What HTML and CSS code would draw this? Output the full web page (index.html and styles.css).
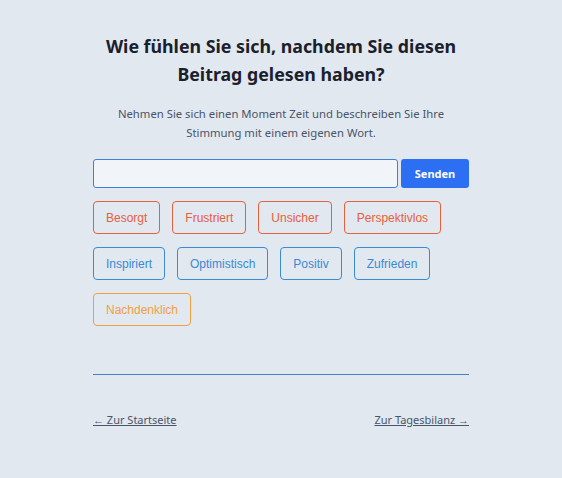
FILE: index.html
```html
<!DOCTYPE html>
<html lang="de">

<head>
    <meta charset="UTF-8">
    <meta name="viewport" content="width=device-width, initial-scale=1.0">
    <title>Stimmung</title>
    <link rel="stylesheet" href="styles.css">
</head>

<body>
    <div class="page">
        <h1 class="title">Wie fühlen Sie sich, nachdem Sie diesen Beitrag gelesen haben?</h1>
        <p class="intro">Nehmen Sie sich einen Moment Zeit und beschreiben Sie Ihre Stimmung mit einem eigenen Wort.</p>

        <form class="mood-form" onsubmit="return false">
            <input type="text" class="mood-input">
            <button type="submit" class="send-button">Senden</button>
        </form>

        <div class="chips">
            <button class="chip chip-negative">Besorgt</button>
            <button class="chip chip-negative">Frustriert</button>
            <button class="chip chip-negative">Unsicher</button>
            <button class="chip chip-negative">Perspektivlos</button>
            <button class="chip chip-positive">Inspiriert</button>
            <button class="chip chip-positive">Optimistisch</button>
            <button class="chip chip-positive">Positiv</button>
            <button class="chip chip-positive">Zufrieden</button>
            <button class="chip chip-neutral">Nachdenklich</button>
        </div>

        <hr class="divider">

        <nav class="page-nav">
            <a href="#">← Zur Startseite</a>
            <a href="#">Zur Tagesbilanz →</a>
        </nav>
    </div>
</body>

</html>
```

FILE: styles.css
```css
body {
    margin: 0;
    background-color: #e2e8f0;
    font-family: "Noto Sans", "Open Sans", sans-serif;
    color: #2d3748;
}

.page {
    max-width: 376px;
    margin: 0 auto;
    padding-top: 32px;
}

.title {
    margin: 0;
    font-size: 17.8px;
    font-weight: 700;
    line-height: 28px;
    text-align: center;
    color: #1a202c;
}

.intro {
    margin: 16px 0 0 0;
    font-size: 11.3px;
    line-height: 19px;
    text-align: center;
    color: #4a5568;
}

.mood-form {
    display: flex;
    gap: 3px;
    margin-top: 17px;
}

.mood-input {
    flex-grow: 1;
    height: 29px;
    box-sizing: border-box;
    border: 1px solid #3b82d6;
    border-radius: 3px;
    background-color: #f1f5f9;
    padding: 0 8px;
}

.send-button {
    width: 68px;
    height: 29px;
    border: none;
    border-radius: 3px;
    background-color: #2d6ff3;
    color: white;
    font-family: "Noto Sans", sans-serif;
    font-size: 11px;
    font-weight: 700;
    cursor: pointer;
}

.chips {
    display: flex;
    flex-wrap: wrap;
    gap: 13px 12px;
    margin-top: 13px;
}

.chip {
    height: 33px;
    padding: 0 12px;
    background: transparent;
    border: 1px solid;
    border-radius: 4px;
    font-family: "Liberation Sans", Arial, sans-serif;
    font-size: 12px;
    cursor: pointer;
}

.chip-negative {
    color: #e5603c;
    border-color: #e5603c;
}

.chip-positive {
    color: #3a8ad4;
    border-color: #3a8ad4;
}

.chip-neutral {
    color: #f0a041;
    border-color: #f0a041;
}

.divider {
    margin: 48px 0 0 0;
    border: none;
    border-top: 1px solid #4a7fc7;
}

.page-nav {
    display: flex;
    justify-content: space-between;
    margin-top: 37px;
    font-size: 11px;
}

.page-nav a {
    color: #4a5568;
}
```
